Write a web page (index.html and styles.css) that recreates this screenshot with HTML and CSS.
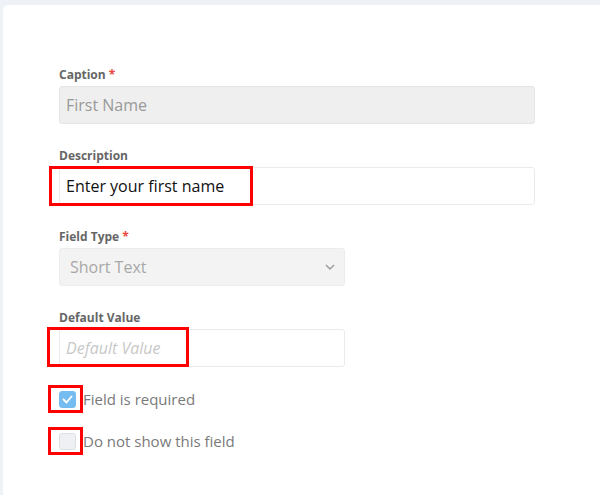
FILE: index.html
```html
<!DOCTYPE html>
<html>
<head>
<meta charset="utf-8">
<link rel="stylesheet" href="styles.css">
</head>
<body>
<div class="card">
  <form class="form">
    <div class="field">
      <label class="label">Caption <span class="req">*</span></label>
      <div class="input disabled wide">First Name</div>
    </div>
    <div class="field">
      <label class="label">Description</label>
      <div class="wrap">
        <div class="input wide dark">Enter your first name</div>
        <span class="mark mark-desc"></span>
      </div>
    </div>
    <div class="field">
      <label class="label">Field Type <span class="req">*</span></label>
      <div class="input disabled narrow select">
        <span>Short Text</span>
        <svg class="chev" width="10" height="6" viewBox="0 0 10 6"><path d="M1 1l4 4 4-4" fill="none" stroke="#9a9a9a" stroke-width="1.4"/></svg>
      </div>
    </div>
    <div class="field last">
      <label class="label">Default Value</label>
      <div class="wrap">
        <div class="input narrow placeholder">Default Value</div>
        <span class="mark mark-def"></span>
      </div>
    </div>
    <div class="check-row">
      <span class="box checked">
        <svg width="11" height="9" viewBox="0 0 11 9"><path d="M1.5 4.5l3 3 5-6" fill="none" stroke="#fff" stroke-width="1.8" stroke-linecap="round" stroke-linejoin="round"/></svg>
        <span class="mark mark-box"></span>
      </span>
      <span class="check-label">Field is required</span>
    </div>
    <div class="check-row second">
      <span class="box">
        <span class="mark mark-box"></span>
      </span>
      <span class="check-label">Do not show this field</span>
    </div>
  </form>
</div>
</body>
</html>
```
FILE: styles.css
```css
html, body {
  margin: 0;
  padding: 0;
}
body {
  background: #eef1f6;
  font-family: "Open Sans", Lato, sans-serif;
  width: 600px;
  height: 495px;
  overflow: hidden;
}
.card {
  margin: 5px 0 0 3px;
  background: #fff;
  border-radius: 5px 0 0 0;
  height: 490px;
  padding: 62px 0 0 56px;
  box-sizing: border-box;
}
.form {
  display: flex;
  flex-direction: column;
}
.field {
  display: flex;
  flex-direction: column;
  margin-bottom: 24px;
}
.field.last {
  margin-bottom: 17px;
}
.label {
  font-size: 12px;
  line-height: 16px;
  height: 16px;
  font-weight: 700;
  color: #666;
  margin-bottom: 3px;
}
.req {
  color: #e8463c;
}
.wrap {
  position: relative;
}
.input {
  height: 38px;
  box-sizing: border-box;
  border: 1px solid #ebebeb;
  border-radius: 3px;
  padding: 0 6px;
  display: flex;
  align-items: center;
  font-size: 16px;
  color: #333;
  background: #fff;
}
.wide { width: 476px; }
.narrow { width: 286px; }
.disabled {
  background: #efefef;
  color: #999;
  border-color: #e4e4e4;
}
.select {
  background: #f3f3f3;
  border-color: #ececec;
  padding: 0 10px;
  justify-content: space-between;
  color: #a8a8a8;
}
.chev { margin-right: -1px; }
.dark { color: #111; }
.placeholder {
  color: #c8c8c8;
  font-style: italic;
}
.mark {
  position: absolute;
  border: 3px solid #f00;
  box-sizing: border-box;
  pointer-events: none;
}
.mark-desc {
  left: -10px;
  top: -1px;
  width: 204px;
  height: 40px;
}
.mark-def {
  left: -12px;
  top: -2px;
  width: 142px;
  height: 40px;
}
.check-row {
  display: flex;
  align-items: center;
  height: 30px;
}
.check-row.second {
  margin-top: 12px;
}
.box {
  position: relative;
  width: 17px;
  height: 17px;
  box-sizing: border-box;
  border-radius: 3px;
  background: #eef0f4;
  border: 1px solid #dcdfe4;
  display: flex;
  align-items: center;
  justify-content: center;
  margin-right: 7px;
}
.box.checked {
  background: #75bdf0;
  border-color: #75bdf0;
}
.mark-box {
  left: -12px;
  top: -7px;
  width: 35px;
  height: 28px;
}
.check-label {
  font-size: 15px;
  color: #7a7a7a;
}
```
